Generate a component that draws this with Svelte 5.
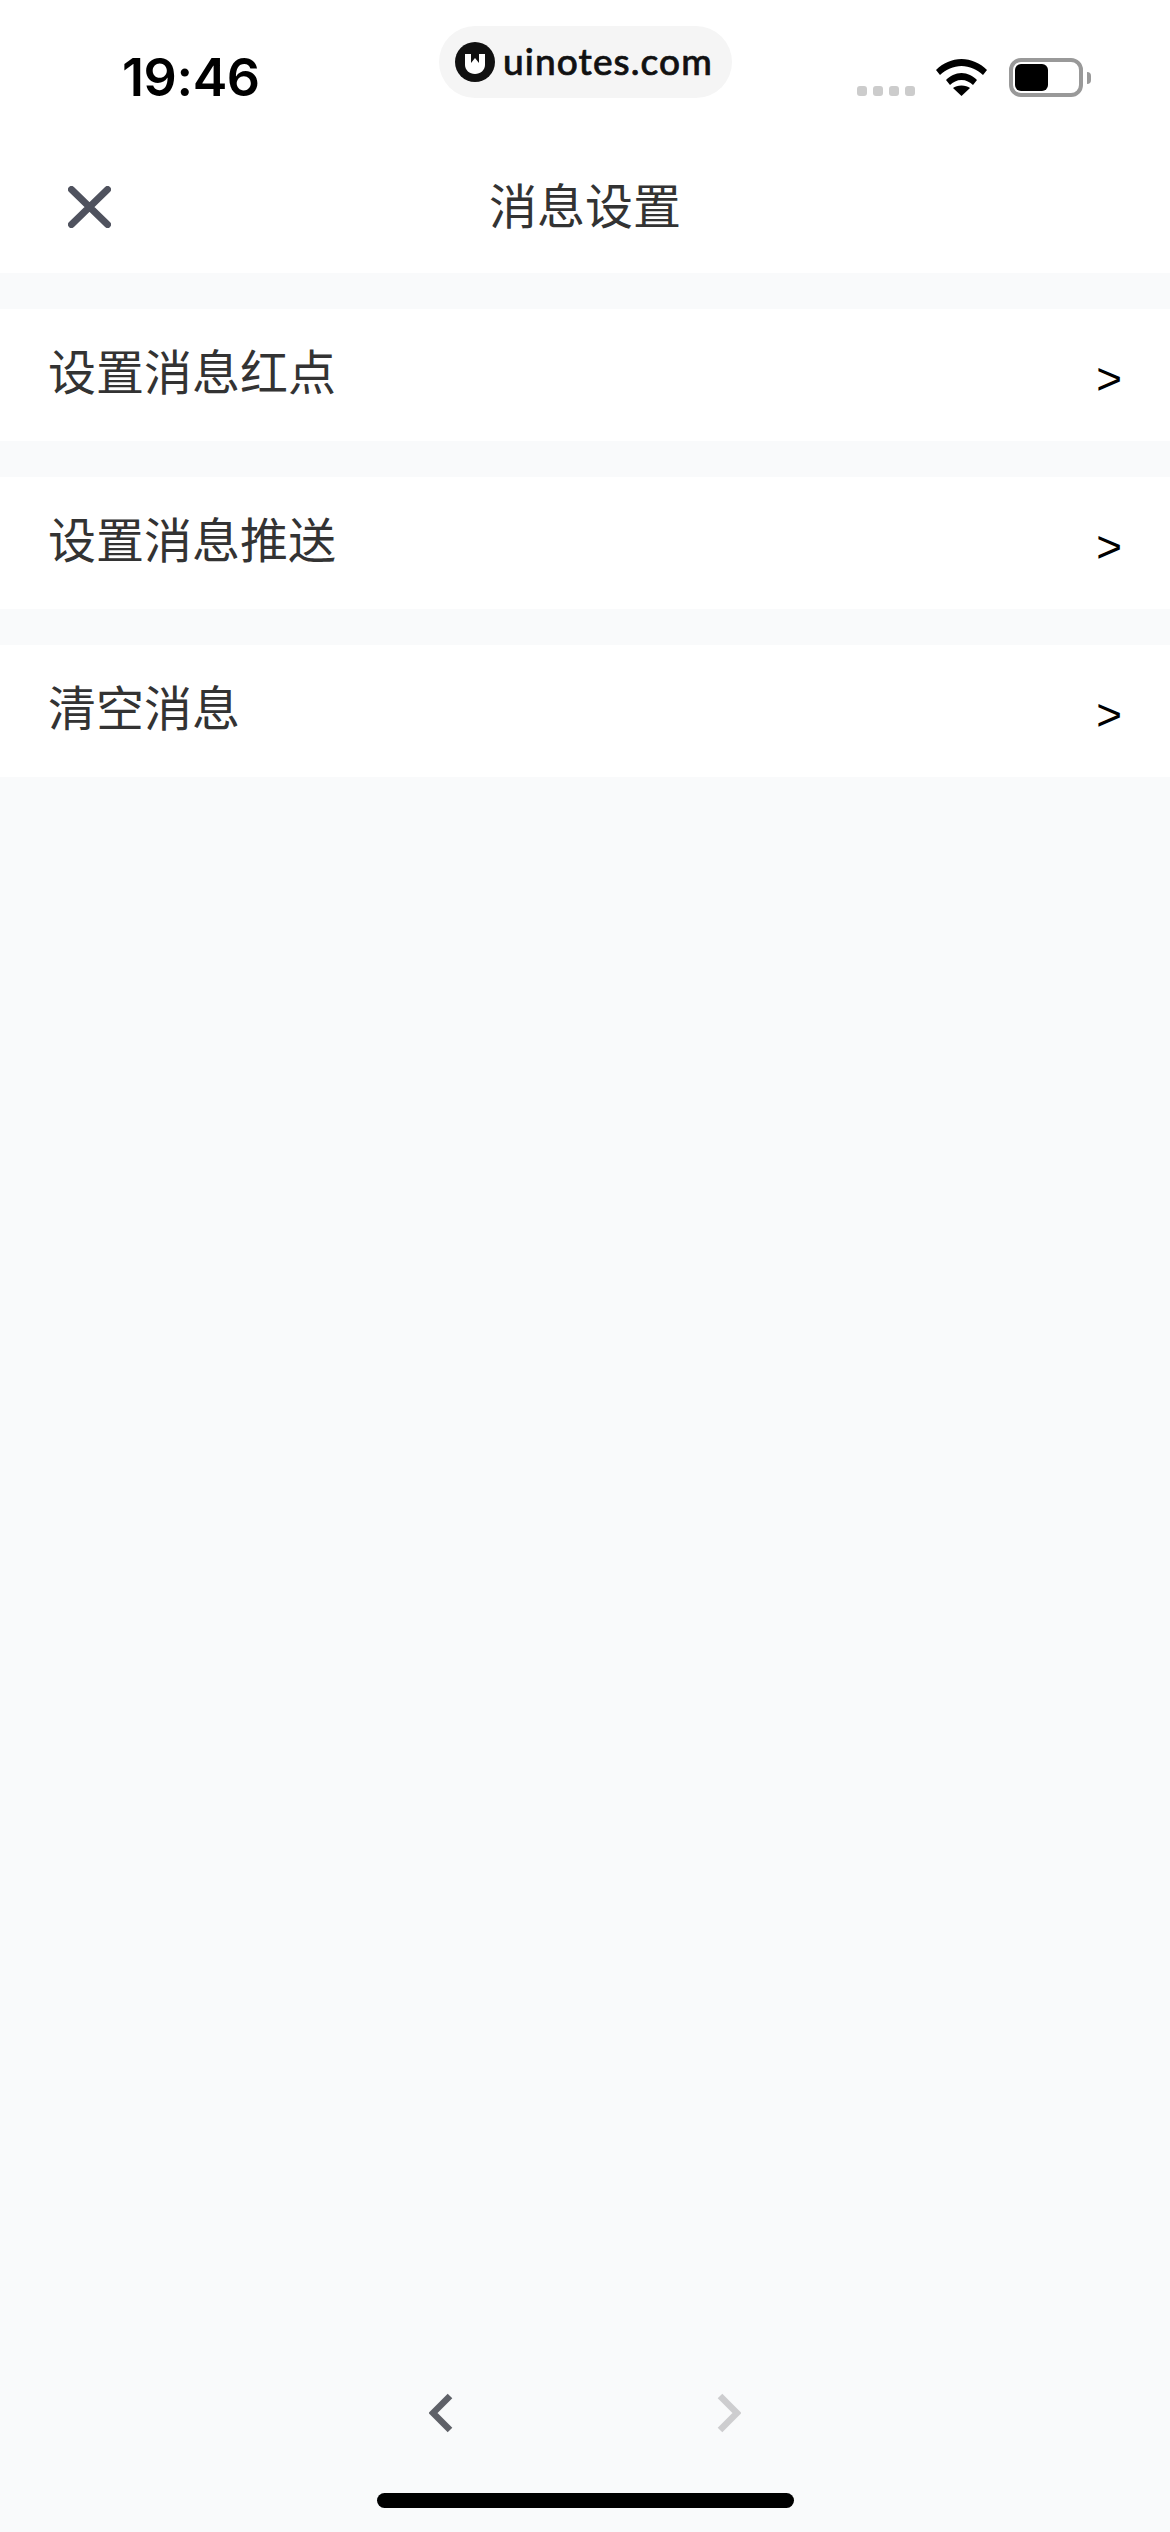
<script lang="ts">
  const rows = ["设置消息红点", "设置消息推送", "清空消息"];
</script>

<div class="page">
  <header class="status-bar">
    <span class="time">19:46</span>
    <div class="pill">
      <svg class="logo" width="40" height="40" viewBox="0 0 40 40">
        <circle cx="20" cy="20" r="20" fill="#111" />
        <path d="M10 12h6v9l4-5 4 5v-9h6v11c0 5-4.500 9-10 9s-10-4-10-9z" fill="#fff" />
      </svg>
      <span class="pill-text">uinotes.com</span>
    </div>
    <div class="status-icons">
      <div class="cell">
        <i></i><i></i><i></i><i></i>
      </div>
      <svg class="wifi" width="51" height="37" viewBox="0 0 51 37">
        <path d="M0 11C7 4 16 0 25.500 0S44 4 51 11l-4 5C41 10.500 33.500 7 25.500 7S10 10.500 4 16z" />
        <path d="M10 21c4-4 9.500-7 15.500-7S37 17 41 21l-4 5c-3-3-7-5-11.500-5S17 23 14 26z" />
        <path d="M17 29c2-1.500 5-2.500 8.500-2.500S32 27.500 34 29l-8.500 8z" />
      </svg>
      <div class="battery">
        <div class="battery-body"><div class="battery-level"></div></div>
        <div class="battery-nub"></div>
      </div>
    </div>
  </header>

  <nav class="nav-bar">
    <button class="close" aria-label="关闭">
      <svg width="43" height="42" viewBox="0 0 43 42">
        <path d="M3.500 3.500 39.500 38.500M39.500 3.500 3.500 38.500" stroke="#4f525e" stroke-width="7" stroke-linecap="round" fill="none" />
      </svg>
    </button>
    <h1 class="title">消息设置</h1>
  </nav>

  <ul class="list">
    {#each rows as row}
      <li class="row">
        <span class="row-label">{row}</span>
        <span class="row-arrow">&gt;</span>
      </li>
    {/each}
  </ul>

  <footer class="toolbar">
    <div class="toolbar-btns">
      <svg width="24" height="40" viewBox="0 0 24 40">
        <path d="M21 3 4 20l17 17" stroke="#5f6168" stroke-width="6.500" stroke-linejoin="miter" fill="none" />
      </svg>
      <svg width="24" height="40" viewBox="0 0 24 40">
        <path d="M3 3l17 17L3 37" stroke="#cdcdcf" stroke-width="6.500" stroke-linejoin="miter" fill="none" />
      </svg>
    </div>
    <div class="home-bar"></div>
  </footer>
</div>

<style>
  :global(body) {
    margin: 0;
    background: #f9fafb;
  }

  .page {
    display: flex;
    flex-direction: column;
    min-height: 2532px;
    background: #f9fafb;
    font-family: "Noto Sans CJK SC", "Liberation Sans", sans-serif;
  }

  .status-bar {
    display: grid;
    grid-template-columns: 439px 293px 1fr;
    height: 141px;
    box-sizing: border-box;
    background: #fff;
  }

  .time {
    padding: 48px 0 0 122px;
    font-family: Inter, sans-serif;
    font-size: 52px;
    font-weight: 600;
    line-height: 60px;
    letter-spacing: -0.4px;
    color: #000;
  }

  .pill {
    display: flex;
    align-items: center;
    gap: 8px;
    height: 72px;
    margin-top: 26px;
    padding-left: 16px;
    box-sizing: border-box;
    background: #f5f5f5;
    border-radius: 36px;
  }

  .logo {
    flex-shrink: 0;
  }

  .pill-text {
    margin-top: -3px;
    font-family: Lato, sans-serif;
    font-size: 37px;
    font-weight: 500;
    letter-spacing: 1.1px;
    color: #111;
    -webkit-text-stroke: 0.7px #111;
  }

  .status-icons {
    display: flex;
    align-items: flex-end;
    justify-content: flex-end;
    height: 97px;
    padding-right: 79px;
    box-sizing: border-box;
  }

  .cell {
    display: flex;
    gap: 6px;
    margin-right: 21px;
    margin-bottom: 1px;
  }

  .cell i {
    display: block;
    width: 10px;
    height: 10px;
    border-radius: 3px;
    background: #ccc;
  }

  .wifi {
    display: block;
    margin-right: 22px;
    margin-bottom: 1px;
    fill: #000;
  }

  .battery {
    display: flex;
    align-items: center;
    gap: 4px;
  }

  .battery-body {
    width: 74px;
    height: 39px;
    box-sizing: border-box;
    padding: 2px;
    border: 4px solid #999;
    border-radius: 12px;
  }

  .battery-level {
    width: 33px;
    height: 27px;
    border-radius: 6px;
    background: #000;
  }

  .battery-nub {
    width: 4px;
    height: 12px;
    border-radius: 0 6px 6px 0;
    background: #999;
  }

  .nav-bar {
    position: relative;
    display: flex;
    align-items: center;
    justify-content: center;
    height: 132px;
    background: #fff;
  }

  .close {
    position: absolute;
    left: 68px;
    top: 45px;
    display: block;
    padding: 0;
    border: 0;
    background: none;
    line-height: 0;
  }

  .title {
    margin: -8px 0 0;
    font-size: 48px;
    font-weight: 400;
    line-height: 60px;
    color: #333;
  }

  .list {
    display: flex;
    flex-direction: column;
    gap: 36px;
    margin: 36px 0 0;
    padding: 0;
    list-style: none;
  }

  .row {
    display: flex;
    align-items: center;
    justify-content: space-between;
    height: 132px;
    padding: 0 48px;
    background: #fff;
  }

  .row-label {
    font-size: 48px;
    line-height: 60px;
    color: #333;
    margin-top: -12px;
  }

  .row-arrow {
    font-family: "Liberation Sans", sans-serif;
    font-size: 44px;
    line-height: 48px;
    color: #000;
    margin-top: 8px;
  }

  .toolbar {
    display: flex;
    flex-direction: column;
    align-items: center;
    margin-top: auto;
    padding-bottom: 24px;
  }

  .toolbar-btns {
    display: flex;
    gap: 264px;
    margin-bottom: 60px;
  }

  .toolbar-btns svg {
    display: block;
  }

  .home-bar {
    width: 417px;
    height: 15px;
    border-radius: 8px;
    background: #000;
  }
</style>
